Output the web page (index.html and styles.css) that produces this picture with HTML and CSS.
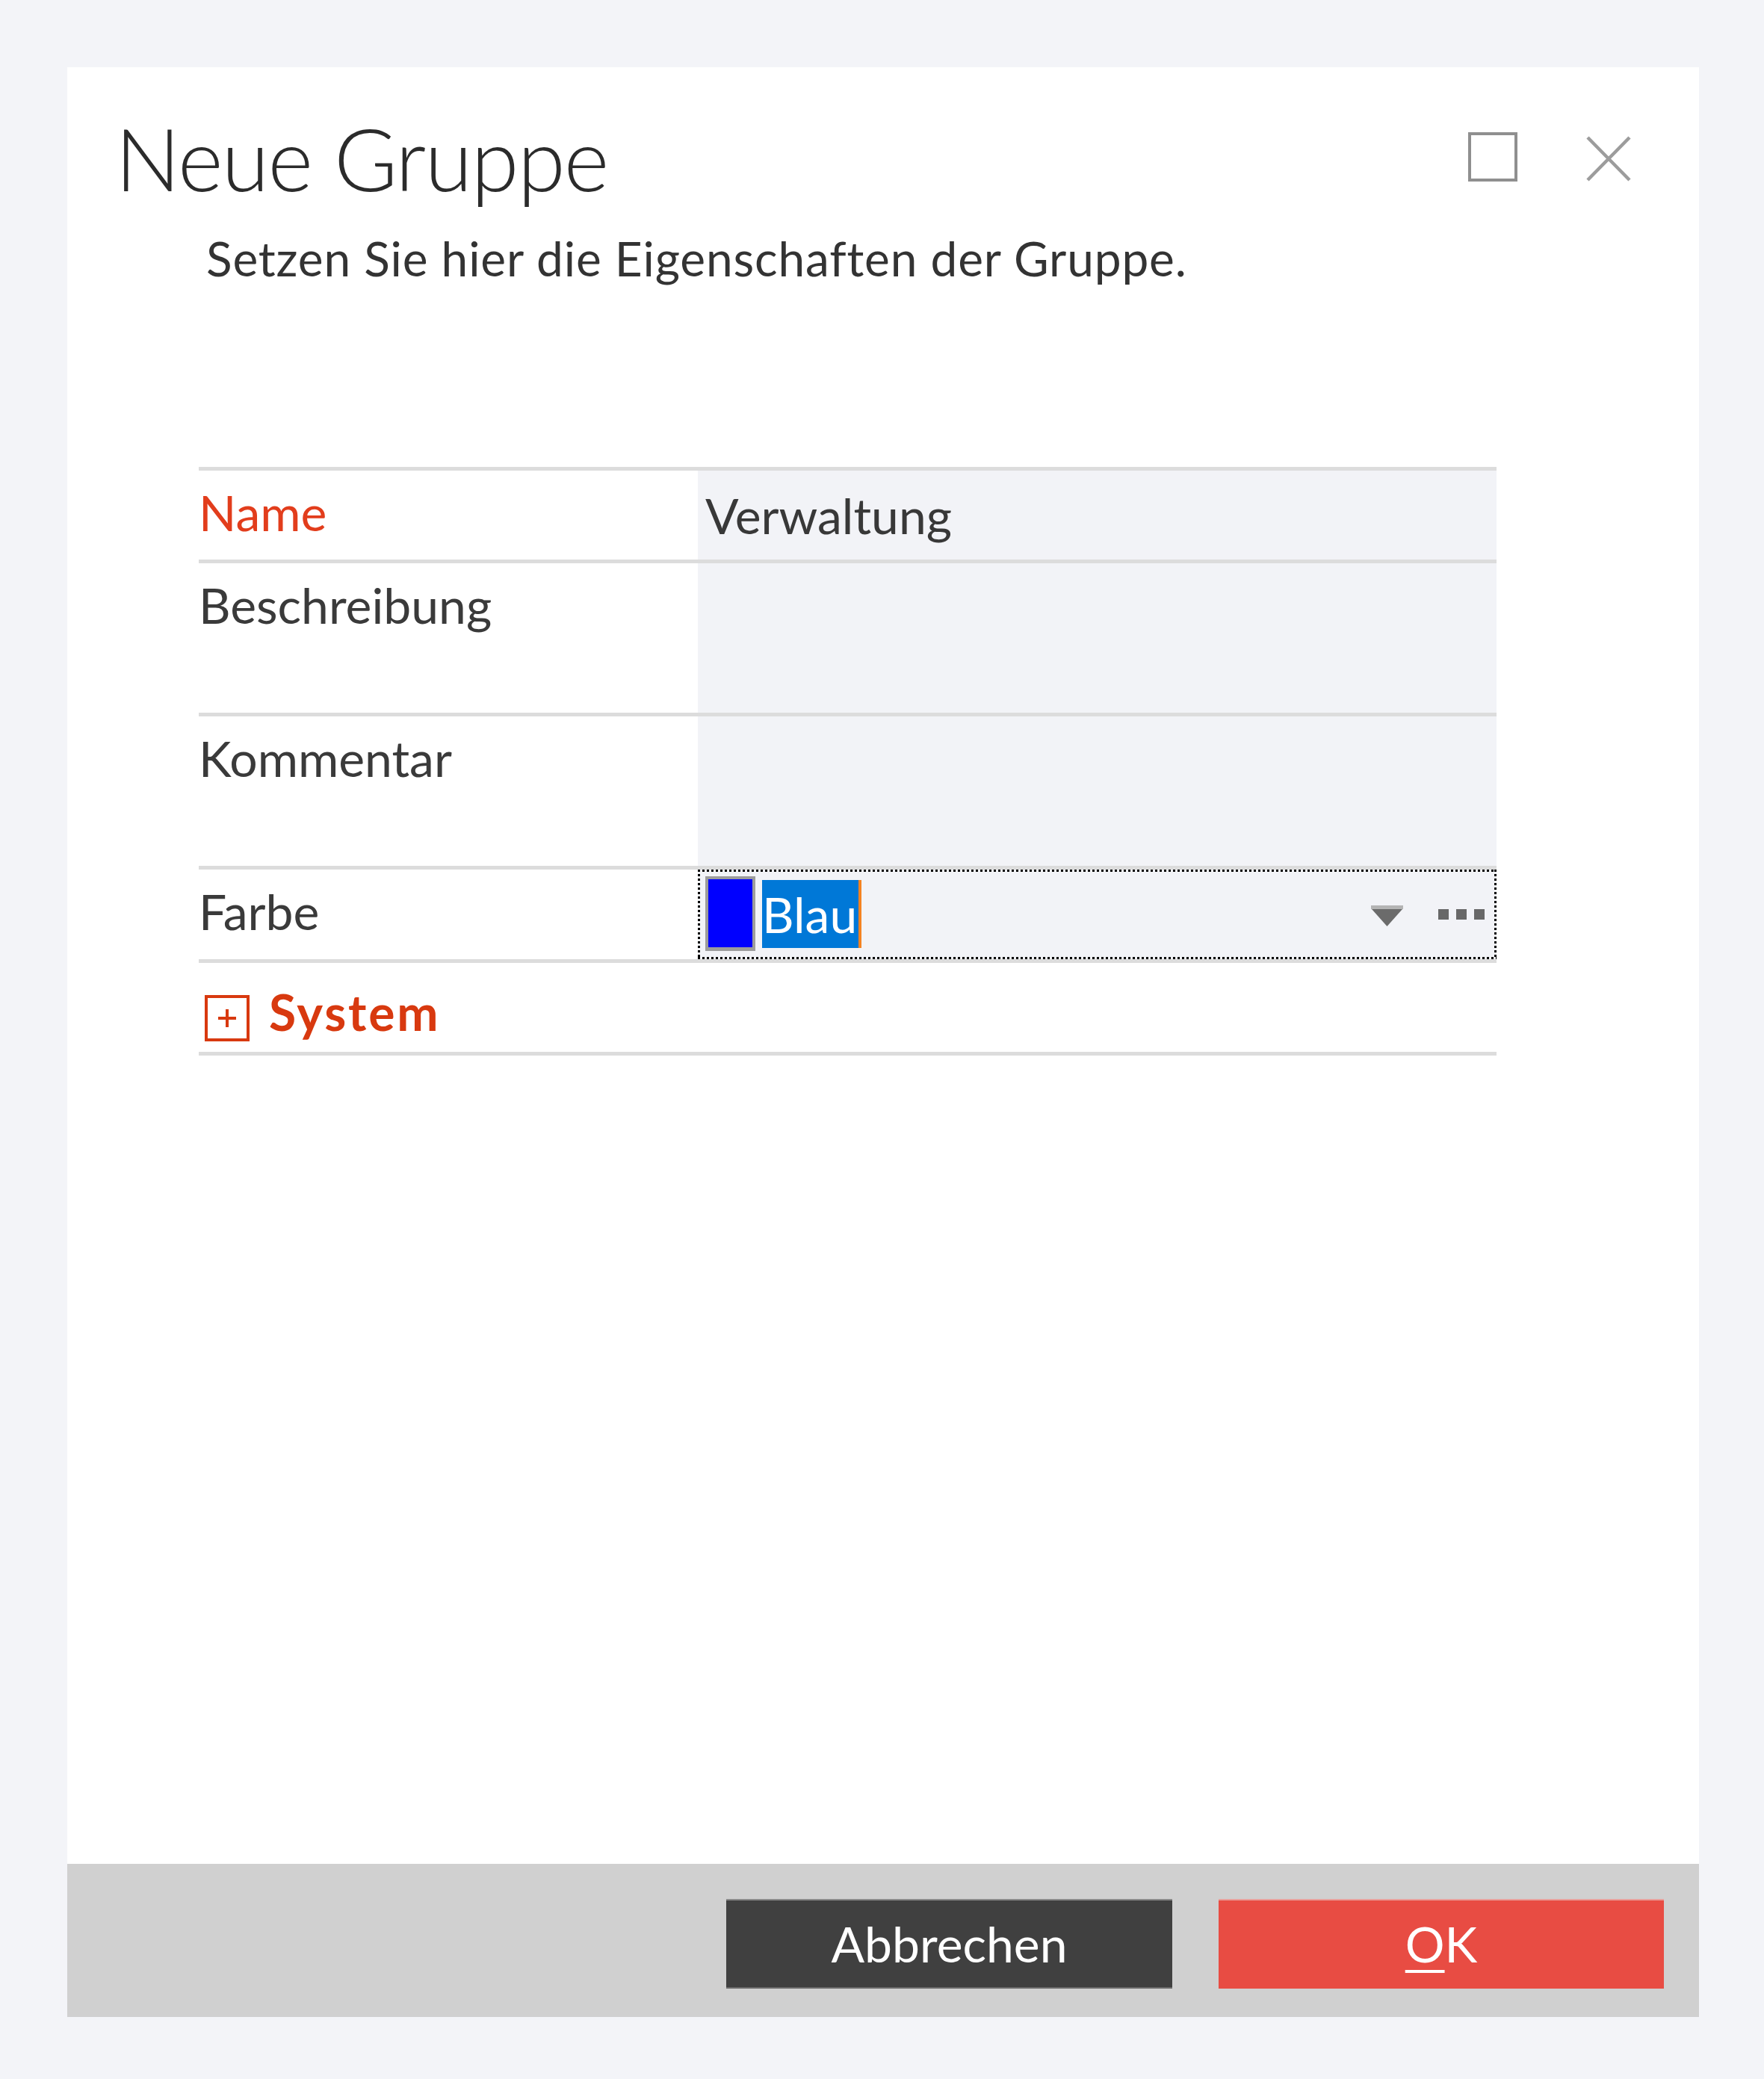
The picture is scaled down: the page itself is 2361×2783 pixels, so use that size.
FILE: index.html
```html
<!DOCTYPE html>
<html lang="de">
<head>
<meta charset="utf-8">
<title>Neue Gruppe</title>
<link rel="stylesheet" href="styles.css">
</head>
<body>
<div class="dialog">
  <div class="body">
    <header class="titlebar">
      <h1 class="title">Neue Gruppe</h1>
      <div class="win-controls">
        <span class="maximize"></span>
        <svg class="close" width="60" height="61" viewBox="0 0 60 61"><path d="M2 2 L58 59 M58 2 L2 59" stroke="#9c9c9c" stroke-width="4.5" fill="none"/></svg>
      </div>
    </header>
    <p class="subtitle">Setzen Sie hier die Eigenschaften der Gruppe.</p>

    <div class="props">
      <div class="row row-name">
        <div class="label label-req">Name</div>
        <div class="value"><span class="value-text">Verwaltung</span></div>
      </div>
      <div class="row row-tall">
        <div class="label">Beschreibung</div>
        <div class="value"></div>
      </div>
      <div class="row row-tall">
        <div class="label">Kommentar</div>
        <div class="value"></div>
      </div>
      <div class="row row-color">
        <div class="label">Farbe</div>
        <div class="value focus">
          <span class="swatch"></span>
          <span class="sel">Blau</span>
          <span class="spacer"></span>
          <svg class="dd" width="43" height="28" viewBox="0 0 43 28"><rect x="0" y="0" width="43" height="5" fill="#b4b4b4"/><polygon points="1,5 42,5 21.5,28" fill="#6b6b6b"/></svg>
          <span class="dots"><i></i><i></i><i></i></span>
        </div>
      </div>
      <div class="row row-group">
        <span class="expander"><svg width="24" height="24" viewBox="0 0 24 24"><path d="M0 12 H24 M12 0 V24" stroke="#d8390f" stroke-width="4"/></svg></span>
        <span class="group-title">System</span>
      </div>
    </div>
  </div>
  <footer class="footer">
    <button class="btn btn-cancel">Abbrechen</button>
    <button class="btn btn-ok"><u>O</u>K</button>
  </footer>
</div>
</body>
</html>
```

FILE: styles.css
```css
html, body {
  margin: 0;
  padding: 0;
}
body {
  background: #f3f4f8;
  width: 2361px;
  height: 2783px;
  font-family: Lato, "Noto Sans", sans-serif;
  color: #383838;
  overflow: hidden;
}
.dialog {
  margin: 90px 0 0 90px;
  width: 2184px;
  height: 2610px;
  background: #ffffff;
  display: flex;
  flex-direction: column;
}
.body {
  flex: 1;
}
.titlebar {
  display: flex;
  align-items: flex-start;
  padding: 52px 91px 0 64px;
}
.title {
  flex: 1;
  margin: 0;
  font-size: 116px;
  line-height: 140px;
  font-weight: 300;
  letter-spacing: -1.8px;
  color: #2b2b2b;
}
.win-controls {
  display: flex;
  align-items: flex-start;
  gap: 92px;
  margin-top: 35px;
}
.maximize {
  display: block;
  width: 58px;
  height: 58px;
  border: 4px solid #8f8f8f;
}
.close {
  display: block;
  margin-top: 5px;
}
.subtitle {
  margin: 24px 0 0 186px;
  font-size: 64px;
  line-height: 80px;
  letter-spacing: 0.85px;
  color: #333;
}
.props {
  margin: 239px 0 0 176px;
  width: 1737px;
  border-bottom: 5px solid #dcdcdc;
}
.row {
  display: grid;
  grid-template-columns: 668px 1fr;
  border-top: 5px solid #dcdcdc;
}
.row-name { height: 119px; }
.row-tall { height: 200px; }
.row-color { height: 120px; }
.label {
  font-size: 66px;
  line-height: 80px;
  padding: 16px 0 0 0;
  color: #3a3a3a;
}
.label-req {
  color: #e23d1c;
}
.value {
  background: #f2f3f7;
}
.value-text {
  display: block;
  font-size: 66px;
  line-height: 80px;
  padding: 20px 0 0 10px;
  color: #383838;
}
.focus {
  display: flex;
  align-items: flex-start;
  background:
    repeating-linear-gradient(90deg, #000 0 3px, transparent 3px 6px) left top / 100% 3px no-repeat,
    repeating-linear-gradient(90deg, #000 0 3px, transparent 3px 6px) left bottom / 100% 3px no-repeat,
    repeating-linear-gradient(180deg, #000 0 3px, transparent 3px 6px) left top / 3px 100% no-repeat,
    repeating-linear-gradient(180deg, #000 0 3px, transparent 3px 6px) right top / 3px 100% no-repeat,
    #f2f3f7;
  padding: 9px 16px 0 10px;
}
.swatch {
  display: block;
  width: 59px;
  height: 91px;
  background: #0000ff;
  border: 4px solid #9c9c9c;
  border-bottom-width: 5px;
}
.sel {
  display: block;
  margin: 5px 0 0 9px;
  height: 91px;
  line-height: 91px;
  font-size: 66px;
  color: #ffffff;
  background: #0078d7;
  padding: 0 2px 0 0;
  border-right: 4px solid #f58220;
}
.spacer {
  flex: 1;
}
.dd {
  display: block;
  margin-top: 39px;
}
.dots {
  display: flex;
  gap: 10px;
  margin: 44px 0 0 47px;
}
.dots i {
  display: block;
  width: 14px;
  height: 14px;
  background: #686868;
}
.row-group {
  display: flex;
  align-items: flex-start;
  height: 119px;
}
.expander {
  display: flex;
  align-items: center;
  justify-content: center;
  box-sizing: border-box;
  width: 60px;
  height: 62px;
  margin: 43px 0 0 8px;
  border: 4px solid #d8390f;
}
.expander svg {
  display: block;
}
.group-title {
  margin: 26px 0 0 26px;
  font-size: 66px;
  line-height: 80px;
  font-weight: 700;
  letter-spacing: 2.8px;
  color: #d8390f;
}
.footer {
  height: 205px;
  box-sizing: border-box;
  background: #d0d0d0;
  display: flex;
  justify-content: flex-end;
  align-items: flex-start;
  gap: 62px;
  padding: 47px 47px 0 0;
}
.btn {
  width: 597px;
  height: 120px;
  border: 0;
  margin: 0;
  padding: 0;
  font-family: Lato, "Noto Sans", sans-serif;
  font-size: 66px;
  line-height: 120px;
  color: #ffffff;
}
.btn-cancel {
  background: #404040;
  box-shadow: inset 0 2px 0 #8a8a8a, inset 0 -2px 0 #6a6a6a;
}
.btn-ok {
  width: 596px;
  background: #e84c43;
  box-shadow: inset 0 2px 0 #e9a09b;
}
.btn-ok u {
  text-decoration-thickness: 4px;
  text-underline-offset: 10px;
}
```
